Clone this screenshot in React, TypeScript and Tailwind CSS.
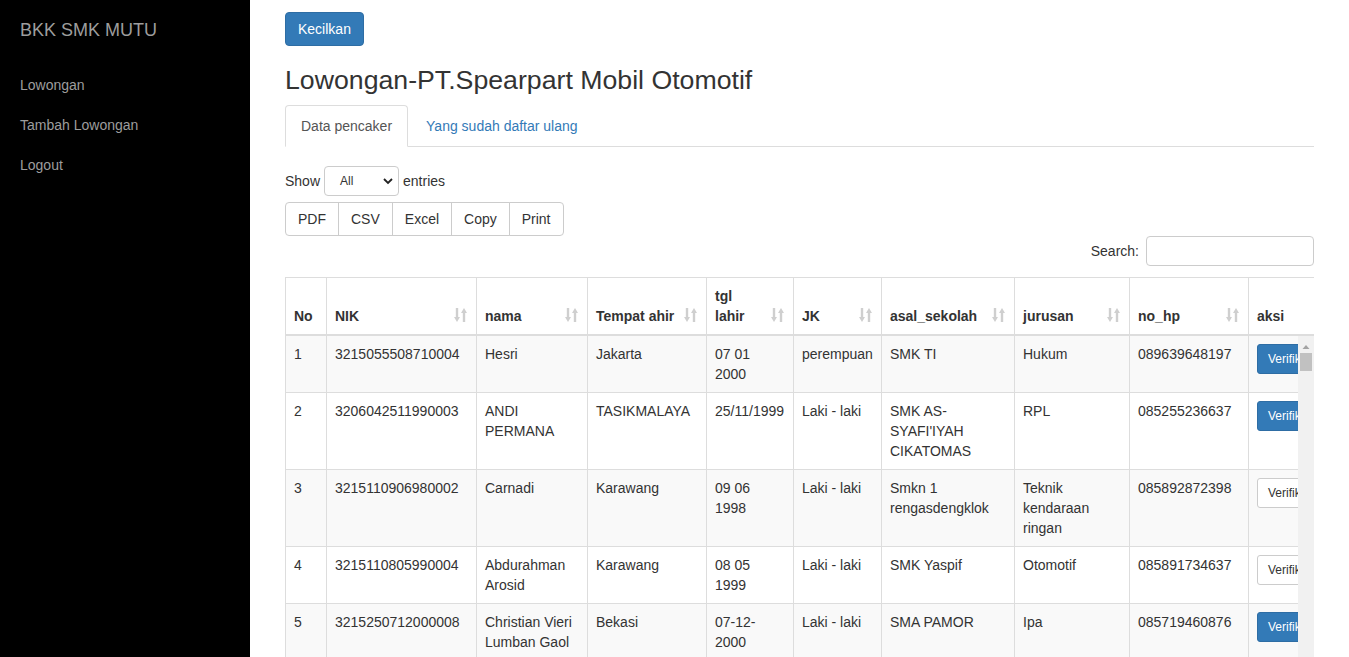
import React from 'react';

const font = "font-['Liberation_Sans',Arial,sans-serif]";

const columns = [
  { label: ['No'], width: 41, sort: false },
  { label: ['NIK'], width: 150, sort: true },
  { label: ['nama'], width: 111, sort: true },
  { label: ['Tempat ahir'], width: 119, sort: true },
  { label: ['tgl', 'lahir'], width: 87, sort: true },
  { label: ['JK'], width: 88, sort: true },
  { label: ['asal_sekolah'], width: 133, sort: true },
  { label: ['jurusan'], width: 115, sort: true },
  { label: ['no_hp'], width: 119, sort: true },
  { label: ['aksi'], width: 100, sort: false },
];

type Row = { cells: string[][]; primary: boolean };

const rows: Row[] = [
  {
    cells: [['1'], ['3215055508710004'], ['Hesri'], ['Jakarta'], ['07 01', '2000'], ['perempuan'], ['SMK TI'], ['Hukum'], ['089639648197']],
    primary: true,
  },
  {
    cells: [['2'], ['3206042511990003'], ['ANDI', 'PERMANA'], ['TASIKMALAYA'], ['25/11/1999'], ['Laki - laki'], ['SMK AS-', "SYAFI'IYAH", 'CIKATOMAS'], ['RPL'], ['085255236637']],
    primary: true,
  },
  {
    cells: [['3'], ['3215110906980002'], ['Carnadi'], ['Karawang'], ['09 06', '1998'], ['Laki - laki'], ['Smkn 1', 'rengasdengklok'], ['Teknik', 'kendaraan', 'ringan'], ['085892872398']],
    primary: false,
  },
  {
    cells: [['4'], ['3215110805990004'], ['Abdurahman', 'Arosid'], ['Karawang'], ['08 05', '1999'], ['Laki - laki'], ['SMK Yaspif'], ['Otomotif'], ['085891734637']],
    primary: false,
  },
  {
    cells: [['5'], ['3215250712000008'], ['Christian Vieri', 'Lumban Gaol'], ['Bekasi'], ['07-12-', '2000'], ['Laki - laki'], ['SMA PAMOR'], ['Ipa'], ['085719460876']],
    primary: true,
  },
  {
    cells: [['6'], ['3215012304990002'], ['Dede', 'Supriatna'], ['Karawang'], ['23 04', '1999'], ['Laki - laki'], ['SMK MUTU'], ['Otomotif'], ['085718830512']],
    primary: false,
  },
];

const tableWidth = columns.reduce((s, c) => s + c.width, 0);

function SortIcon() {
  return (
    <svg width="13" height="14" viewBox="0 0 13 14" className="absolute right-[9px] bottom-[12px]" fill="#cfcfcf">
      <rect x="1.8" y="0" width="2.4" height="10" />
      <polygon points="0,9 6,9 3,14" />
      <rect x="8.8" y="4" width="2.4" height="10" />
      <polygon points="7,5 13,5 10,0" />
    </svg>
  );
}

function Cols() {
  return (
    <colgroup>
      {columns.map((c) => (
        <col key={c.label.join()} style={{ width: c.width }} />
      ))}
    </colgroup>
  );
}

export default function App() {
  return (
    <div className={`flex h-screen overflow-hidden bg-white text-[14px] leading-[20px] text-[#333] ${font}`}>
      {/* Sidebar */}
      <aside className="w-[250px] shrink-0 bg-black">
        <div className="px-[20px] pt-[20px] text-[18px] leading-[20px] text-[#9d9d9d]">BKK SMK MUTU</div>
        <nav className="mt-[25px] flex flex-col">
          {['Lowongan', 'Tambah Lowongan', 'Logout'].map((item) => (
            <a key={item} href="#" className="flex h-10 items-center px-[20px] text-[#9d9d9d]">
              {item}
            </a>
          ))}
        </nav>
      </aside>

      {/* Main */}
      <main className="flex min-w-0 flex-1 flex-col px-[35px]">
        <div className="mt-[12px]">
          <button className="h-[34px] rounded-[4px] border border-[#2e6da4] bg-[#337ab7] px-[12px] text-white">
            Kecilkan
          </button>
        </div>
        <h1 className="mt-[20px] text-[26.7px] leading-[28px] font-normal">Lowongan-PT.Spearpart Mobil Otomotif</h1>

        {/* Tabs */}
        <div className="mt-[11px] flex border-b border-[#ddd]">
          <div className="-mb-px mr-[2px] rounded-t-[4px] border border-[#ddd] border-b-white bg-white px-[15px] py-[10px] text-[#555]">
            Data pencaker
          </div>
          <div className="-mb-px border border-transparent px-[15px] py-[10px] text-[#337ab7]">Yang sudah daftar ulang</div>
        </div>

        {/* Show entries */}
        <div className="mt-[19px] flex items-center">
          <span>Show</span>
          <div className="mx-[4px] flex h-[30px] w-[75px] items-center justify-between rounded-[4px] border border-[#ccc] pr-[5px] pl-[15px] text-[12px]">
            <span>All</span>
            <svg width="10" height="7" viewBox="0 0 10 7">
              <polyline points="1,1 5,5 9,1" fill="none" stroke="#222" strokeWidth="1.8" />
            </svg>
          </div>
          <span>entries</span>
        </div>

        {/* Export buttons */}
        <div className="mt-[6px] flex">
          {['PDF', 'CSV', 'Excel', 'Copy', 'Print'].map((b, i, arr) => (
            <button
              key={b}
              className={`h-[34px] border border-[#ccc] bg-white px-[12px] text-[#333] ${i > 0 ? '-ml-px' : ''} ${
                i === 0 ? 'rounded-l-[4px]' : ''
              } ${i === arr.length - 1 ? 'rounded-r-[4px]' : ''}`}
            >
              {b}
            </button>
          ))}
        </div>

        {/* Search */}
        <div className="flex items-center justify-end">
          <span>Search:</span>
          <div className="ml-[7px] h-[30px] w-[168px] rounded-[4px] border border-[#ccc]" />
        </div>

        {/* Table */}
        <div className="mt-[11px] flex min-h-0 flex-1 flex-col overflow-hidden">
          <table className="table-fixed border-collapse" style={{ width: tableWidth }}>
            <Cols />
            <thead>
              <tr>
                {columns.map((c) => (
                  <th
                    key={c.label.join()}
                    className={`relative border border-b-2 border-[#ddd] py-[8px] pl-[8px] text-left align-bottom font-bold whitespace-nowrap ${
                      c.sort ? 'pr-[30px]' : 'pr-[8px]'
                    }`}
                  >
                    {c.label.map((l) => (
                      <div key={l}>{l}</div>
                    ))}
                    {c.sort && <SortIcon />}
                  </th>
                ))}
              </tr>
            </thead>
          </table>

          <div className="flex min-h-0 flex-1">
            <div className="min-w-0 flex-1 overflow-hidden">
              <table className="table-fixed border-collapse" style={{ width: tableWidth }}>
                <Cols />
                <tbody>
                  {rows.map((r, ri) => (
                    <tr key={ri} className={ri % 2 === 0 ? 'bg-[#f9f9f9]' : 'bg-white'}>
                      {r.cells.map((cell, ci) => (
                        <td key={ci} className="border border-t-0 border-[#ddd] p-[8px] align-top whitespace-nowrap">
                          {cell.map((line) => (
                            <div key={line}>{line}</div>
                          ))}
                        </td>
                      ))}
                      <td className="border border-t-0 border-[#ddd] p-[8px] align-top whitespace-nowrap">
                        <button
                          className={`h-[30px] rounded-[3px] border px-[10px] text-[12px] ${
                            r.primary
                              ? 'border-[#2e6da4] bg-[#337ab7] text-white'
                              : 'border-[#ccc] bg-white text-[#333]'
                          }`}
                        >
                          Verifikasi
                        </button>
                      </td>
                    </tr>
                  ))}
                </tbody>
              </table>
            </div>
            {/* scrollbar */}
            <div className="relative w-[16px] shrink-0 bg-[#f1f1f1]">
              <svg width="16" height="14" viewBox="0 0 16 14" className="absolute top-[4px] left-0">
                <polygon points="4.5,9 11.5,9 8,5" fill="#a3a3a3" />
              </svg>
              <div className="absolute top-[17px] left-[2px] h-[18px] w-[12px] bg-[#c1c1c1]" />
            </div>
          </div>
        </div>
      </main>
    </div>
  );
}
